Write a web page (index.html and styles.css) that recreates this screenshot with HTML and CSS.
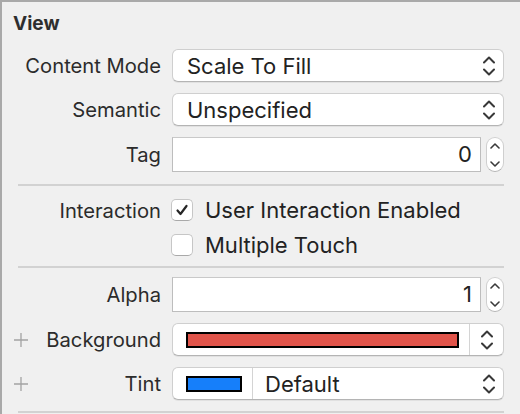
FILE: index.html
```html
<!DOCTYPE html>
<html>
<head>
<meta charset="utf-8">
<link rel="stylesheet" href="styles.css">
</head>
<body>
<div class="panel">
  <div class="title">View</div>

  <div class="row popup-row first">
    <div class="label"><span class="text">Content Mode</span></div>
    <div class="popup">
      <span class="val">Scale To Fill</span>
      <svg class="chev" width="12" height="20" viewBox="0 0 12 20"><path d="M1 6.5 L6 1.5 L11 6.5 M1 13.5 L6 18.5 L11 13.5"/></svg>
    </div>
  </div>

  <div class="row popup-row">
    <div class="label"><span class="text">Semantic</span></div>
    <div class="popup">
      <span class="val">Unspecified</span>
      <svg class="chev" width="12" height="20" viewBox="0 0 12 20"><path d="M1 6.5 L6 1.5 L11 6.5 M1 13.5 L6 18.5 L11 13.5"/></svg>
    </div>
  </div>

  <div class="row field-row">
    <div class="label"><span class="text">Tag</span></div>
    <div class="stepper-wrap">
      <div class="field">0</div>
      <div class="stepper">
        <svg width="10" height="26" viewBox="0 0 10 26"><path d="M1 6 L5 2 L9 6 M1 20 L5 24 L9 20"/></svg>
      </div>
    </div>
  </div>

  <div class="sep sep1"></div>

  <div class="row check-row first-check">
    <div class="label"><span class="text">Interaction</span></div>
    <div class="check-wrap">
      <div class="checkbox">
        <svg width="22" height="22" viewBox="0 0 22 22"><path d="M6.5 11.5 L9.5 15 L15.5 7"/></svg>
      </div>
      <span class="check-text">User Interaction Enabled</span>
    </div>
  </div>

  <div class="row check-row second-check">
    <div class="label"></div>
    <div class="check-wrap">
      <div class="checkbox"></div>
      <span class="check-text">Multiple Touch</span>
    </div>
  </div>

  <div class="sep sep2"></div>

  <div class="row field-row alpha-row">
    <div class="label"><span class="text">Alpha</span></div>
    <div class="stepper-wrap">
      <div class="field">1</div>
      <div class="stepper">
        <svg width="10" height="26" viewBox="0 0 10 26"><path d="M1 6 L5 2 L9 6 M1 20 L5 24 L9 20"/></svg>
      </div>
    </div>
  </div>

  <div class="row popup-row">
    <div class="label">
      <svg class="plus" width="14" height="14" viewBox="0 0 14 14"><path d="M7 0 V14 M0 7 H14"/></svg>
      <span class="text">Background</span>
    </div>
    <div class="popup color-popup">
      <div class="swatch-cell wide"><div class="swatch red"></div></div>
      <div class="chev-cell">
        <svg class="chev" width="12" height="20" viewBox="0 0 12 20"><path d="M1 6.5 L6 1.5 L11 6.5 M1 13.5 L6 18.5 L11 13.5"/></svg>
      </div>
    </div>
  </div>

  <div class="row popup-row">
    <div class="label">
      <svg class="plus" width="14" height="14" viewBox="0 0 14 14"><path d="M7 0 V14 M0 7 H14"/></svg>
      <span class="text">Tint</span>
    </div>
    <div class="popup color-popup">
      <div class="swatch-cell narrow"><div class="swatch blue"></div></div>
      <span class="val tint-val">Default</span>
      <svg class="chev" width="12" height="20" viewBox="0 0 12 20"><path d="M1 6.5 L6 1.5 L11 6.5 M1 13.5 L6 18.5 L11 13.5"/></svg>
    </div>
  </div>

  <div class="sep sep3"></div>
</div>
</body>
</html>
```
FILE: styles.css
```css
html, body {
  margin: 0;
  padding: 0;
  background: #f0f0f0;
}

body {
  width: 520px;
  height: 414px;
  overflow: hidden;
  font-family: "Inter", "Liberation Sans", sans-serif;
  color: #262626;
}

.panel {
  box-sizing: border-box;
  width: 520px;
  height: 414px;
  border-top: 2px solid #a9a9a9;
  border-left: 2px solid #a9a9a9;
  padding-right: 16px;
}

.title {
  font-weight: 700;
  font-size: 19px;
  line-height: 24px;
  height: 24px;
  padding-left: 11px;
  margin-top: 10px;
  color: #2e2e2e;
}

.row {
  display: grid;
  grid-template-columns: 159px 332px;
  column-gap: 11px;
  align-items: center;
}

.label {
  display: flex;
  align-items: center;
  justify-content: flex-end;
  font-size: 20.2px;
  color: #2b2b2b;
}

.label .plus {
  margin-left: 12px;
  margin-right: auto;
  stroke: #a3a3a3;
  stroke-width: 1.3;
  fill: none;
}

.popup-row {
  height: 33px;
  margin-top: 11px;
}

.popup-row.first {
  margin-top: 13px;
}

.popup {
  box-sizing: border-box;
  height: 33px;
  background: #ffffff;
  border: 1px solid #cfcfcf;
  border-bottom-color: #b4b4b4;
  border-radius: 6px;
  box-shadow: 0 1px 0 rgba(0, 0, 0, 0.06);
  display: flex;
  align-items: center;
  padding-left: 14px;
  padding-right: 7px;
  font-size: 22px;
  color: #222;
}

.popup .val {
  flex: 1;
}

.chev {
  fill: none;
  stroke: #383838;
  stroke-width: 2;
  stroke-linecap: round;
  stroke-linejoin: round;
}

.popup > .chev {
  margin-right: 1px;
}

.field-row {
  height: 35px;
  margin-top: 11px;
}

.stepper-wrap {
  display: flex;
  align-items: center;
  gap: 5px;
  height: 35px;
}

.field {
  box-sizing: border-box;
  flex: 1;
  height: 35px;
  background: #ffffff;
  border: 1px solid #bdbdbd;
  border-top-color: #c9c9c9;
  text-align: right;
  padding-right: 8px;
  font-size: 22px;
  line-height: 33px;
  color: #222;
}

.stepper {
  box-sizing: border-box;
  width: 18px;
  height: 35px;
  background: #ffffff;
  border: 1px solid #cfcfcf;
  border-bottom-color: #b4b4b4;
  border-radius: 9px;
  display: flex;
  align-items: center;
  justify-content: center;
}

.stepper svg {
  fill: none;
  stroke: #3a3a3a;
  stroke-width: 1.6;
  stroke-linecap: round;
  stroke-linejoin: round;
}

.sep {
  height: 2px;
  background: #d2d2d2;
  margin-left: 16px;
}

.sep1 {
  margin-top: 12px;
}

.sep2 {
  margin-top: 11px;
}

.sep3 {
  margin-top: 11px;
}

.check-row {
  height: 23px;
}

.first-check {
  margin-top: 11px;
}

.second-check {
  margin-top: 12px;
}

.check-wrap {
  display: flex;
  align-items: center;
  margin-left: -1px;
}

.checkbox {
  box-sizing: border-box;
  width: 22px;
  height: 22px;
  background: #ffffff;
  border: 1px solid #c6c6c6;
  border-bottom-color: #a9a9a9;
  border-radius: 5px;
  flex-shrink: 0;
}

.checkbox svg {
  display: block;
  margin: -1px;
  fill: none;
  stroke: #262626;
  stroke-width: 2.2;
  stroke-linecap: round;
  stroke-linejoin: round;
}

.check-text {
  margin-left: 12px;
  font-size: 22px;
  color: #222;
}

.alpha-row {
  margin-top: 9px;
}

.color-popup {
  padding-left: 0;
  padding-right: 0;
}

.swatch-cell {
  height: 100%;
  display: flex;
  align-items: center;
  box-sizing: border-box;
  padding-left: 13px;
  border-right: 1px solid #d4d4d4;
}

.swatch-cell.wide {
  width: 297px;
}

.swatch-cell.narrow {
  width: 80px;
}

.swatch {
  box-sizing: border-box;
  height: 16px;
  border: 2px solid #000;
}

.wide .swatch {
  width: 273px;
}

.narrow .swatch {
  width: 56px;
}

.swatch.red {
  background: #e0544a;
}

.swatch.blue {
  background: #167ffa;
}

.chev-cell {
  flex: 1;
  display: flex;
  justify-content: center;
  align-items: center;
}

.tint-val {
  padding-left: 12px;
}

.color-popup > .chev {
  margin-right: 8px;
}
```
